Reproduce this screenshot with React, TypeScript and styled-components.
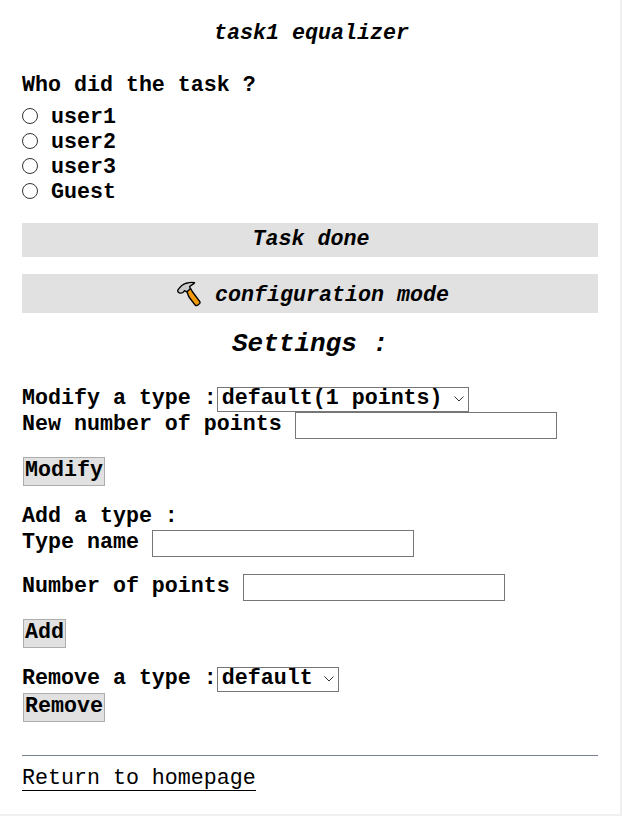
import React from "react";
import styled, { createGlobalStyle, css } from "styled-components";

const GlobalStyle = createGlobalStyle`
  *, *::before, *::after { box-sizing: border-box; }
  html, body { margin: 0; background: #f0f0f0; }
`;

const type = css`
  font-family: "Courier New", "Liberation Mono", monospace;
  font-size: 21.65px;
  font-weight: 700;
  line-height: 26px;
  color: #000;
`;

const Page = styled.main`
  ${type}
  width: 620px;
  height: 814px;
  padding: 21px 22px 0;
  background: #fff;
  white-space: pre;
  overflow: hidden;
`;

const Title = styled.h1`
  ${type}
  margin: 0 0 26px;
  padding-left: 3px;
  font-style: italic;
  text-align: center;
`;

const Question = styled.div`
  height: 26px;
`;

const Options = styled.div`
  display: flex;
  flex-direction: column;
  margin: 7px 0 17px;
`;

const Option = styled.label`
  display: flex;
  align-items: flex-start;
  gap: 13px;
  height: 25px;
  line-height: 23px;
`;

const Radio = styled.input`
  appearance: none;
  width: 16px;
  height: 16px;
  margin: 2px 0 0;
  border: 1px solid #333;
  border-radius: 50%;
  background: #fff;
`;

const BarButton = styled.button<{ $tall?: boolean }>`
  ${type}
  display: flex;
  justify-content: center;
  align-items: flex-start;
  width: 576px;
  height: ${(p) => (p.$tall ? 39 : 34)}px;
  margin: 0 0 17px;
  padding: ${(p) => (p.$tall ? "9px 0 0 5px" : "4px 0 0 2px")};
  border: 0;
  background: #e1e1e1;
  font-style: italic;
  white-space: pre;
`;

const Hammer = styled.svg`
  width: 26px;
  height: 26px;
  margin: -2px 13px 0 0;
`;

const Heading = styled.h2`
  ${type}
  margin: 0 0 28px;
  font-size: 26px;
  line-height: 28px;
  font-style: italic;
  text-align: center;
`;

const Row = styled.div<{ $after?: number }>`
  display: flex;
  align-items: flex-start;
  margin-bottom: ${(p) => p.$after ?? 0}px;
`;

const Field = styled.input`
  ${type}
  width: 262px;
  height: 27px;
  padding: 0 3px;
  border: 1px solid #767676;
  border-radius: 0;
  background: #fff;
`;

const SelectBox = styled.span<{ $width: number }>`
  display: grid;
  width: ${(p) => p.$width}px;
  height: 25px;
  margin-top: 1px;
  align-items: start;
`;

const Select = styled.select`
  ${type}
  appearance: none;
  grid-area: 1 / 1;
  width: 100%;
  height: 25px;
  padding: 0 0 2px 4px;
  border: 1px solid #767676;
  border-radius: 0;
  background: #fff;
  line-height: 21px;
`;

const Chevron = styled.svg`
  grid-area: 1 / 1;
  justify-self: end;
  width: 10px;
  height: 6px;
  margin: 9px 5px 0 0;
  pointer-events: none;
`;

const SmallButton = styled.button<{ $after: number }>`
  ${type}
  display: block;
  height: 29px;
  margin: 0 1px ${(p) => p.$after}px;
  padding: 0 1px 1px;
  border: 1px solid #adadad;
  background: #e1e1e1;
`;

const Divider = styled.hr`
  height: 1px;
  margin: 0 0 10px;
  border: 0;
  background: #778088;
`;

const HomeLink = styled.a`
  ${type}
  display: inline-block;
  height: 25px;
  border-bottom: 1px solid #000;
  font-weight: 400;
  text-decoration: none;
`;

function Dropdown({ value, width }: { value: string; width: number }) {
  return (
    <SelectBox $width={width}>
      <Select defaultValue={value}>
        <option>{value}</option>
      </Select>
      <Chevron viewBox="0 0 10 6" fill="none" stroke="#333">
        <path d="M.5.5 5 5 9.5.5" />
      </Chevron>
    </SelectBox>
  );
}

export default function App() {
  return (
    <>
      <GlobalStyle />
      <Page>
        <Title>task1 equalizer</Title>
        <Question>Who did the task ?</Question>
        <Options>
          {["user1", "user2", "user3", "Guest"].map((name) => (
            <Option key={name}>
              <Radio type="radio" name="user" />
              {name}
            </Option>
          ))}
        </Options>
        <BarButton>Task done</BarButton>
        <BarButton $tall>
          <Hammer viewBox="0 0 26 26" stroke="#000" strokeWidth="1.4" strokeLinejoin="round">
            <path d="m10.6 10 4-2.5 2 3.5 7.4 9.8c.8 1.4-3 4.6-4.6 3.6L13 16Z" fill="#f09a0b" />
            <path d="M1.8 9.2c2-3 5.1-6 8.5-7 3-.8 6.2-1 8.2-.5-.2 1.5-3.8 2.2-4.8 4l.6 2.2-3.4 2.9-2.4-1.2c-.8.9-1.1 2.6-3.9 2.5C2.8 11.9 1.4 10.7 1.8 9.2Z" fill="#c8cacc" />
          </Hammer>
          configuration mode
        </BarButton>
        <Heading>Settings :</Heading>
        <Row>
          Modify a type :<Dropdown value="default(1 points)" width={252} />
        </Row>
        <Row $after={18}>
          {"New number of points "}
          <Field />
        </Row>
        <SmallButton $after={18}>Modify</SmallButton>
        <Row>Add a type :</Row>
        <Row $after={17}>
          {"Type name "}
          <Field />
        </Row>
        <Row $after={18}>
          {"Number of points "}
          <Field />
        </Row>
        <SmallButton $after={18}>Add</SmallButton>
        <Row $after={1}>
          Remove a type :<Dropdown value="default" width={122} />
        </Row>
        <SmallButton $after={33}>Remove</SmallButton>
        <Divider />
        <HomeLink href="#">Return to homepage</HomeLink>
      </Page>
    </>
  );
}
